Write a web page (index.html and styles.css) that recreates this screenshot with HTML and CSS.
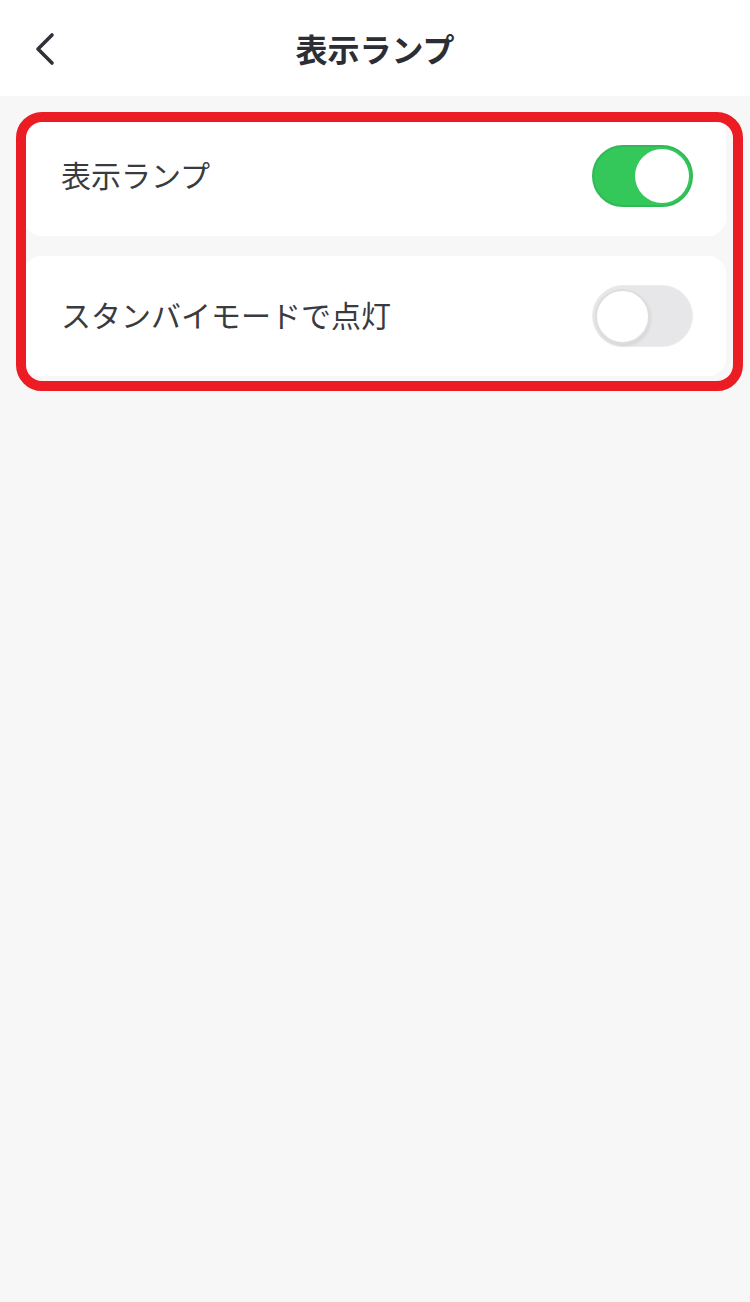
FILE: index.html
```html
<!DOCTYPE html>
<html lang="ja">
<head>
<meta charset="utf-8">
<link rel="stylesheet" href="styles.css">
</head>
<body>
<header class="nav">
  <div class="nav-left">
    <svg class="back" width="24" height="34" viewBox="0 0 24 34"><path d="M18 3 L4 17 L18 31" fill="none" stroke="#30323a" stroke-width="3.6" stroke-linecap="round" stroke-linejoin="round"/></svg>
  </div>
  <h1 class="title">表示ランプ</h1>
  <div class="nav-right"></div>
</header>
<main class="content">
  <div class="group">
    <div class="card">
      <span class="label">表示ランプ</span>
      <span class="toggle on"><span class="knob"></span></span>
    </div>
    <div class="card">
      <span class="label">スタンバイモードで点灯</span>
      <span class="toggle off"><span class="knob"></span></span>
    </div>
  </div>
</main>
</body>
</html>
```
FILE: styles.css
```css
html, body {
  margin: 0;
  padding: 0;
  background: #f7f7f7;
  font-family: "Noto Sans CJK JP", "Noto Sans", sans-serif;
}
.nav {
  height: 96px;
  background: #ffffff;
  display: grid;
  grid-template-columns: 1fr auto 1fr;
  align-items: center;
}
.nav-left {
  padding-left: 34px;
  display: flex;
  align-items: center;
}
.back { display: block; margin-top: 2px; }
.title {
  margin: 0;
  font-size: 32px;
  font-weight: 700;
  color: #2c2e36;
  line-height: 1;
}
.content {
  padding: 20px 24px;
}
.group {
  position: relative;
  display: flex;
  flex-direction: column;
  gap: 20px;
}
.group::after {
  content: "";
  position: absolute;
  left: -8px;
  top: -4px;
  right: -17px;
  bottom: -15px;
  border: 10px solid #ec1c24;
  border-radius: 26px;
  pointer-events: none;
}
.card {
  background: #ffffff;
  border-radius: 18px;
  height: 120px;
  display: flex;
  align-items: center;
  justify-content: space-between;
  padding: 0 33px 0 37px;
}
.label {
  font-size: 30px;
  color: #3a3b40;
  line-height: 1;
  margin-top: -4px;
}
.toggle {
  width: 101px;
  height: 62px;
  border-radius: 31px;
  box-sizing: border-box;
  display: flex;
  align-items: center;
}
.toggle.on {
  background: #34c759;
  border: 2px solid #31b957;
  justify-content: flex-end;
  padding-right: 2px;
}
.toggle.on .knob {
  width: 54px;
  height: 54px;
  border-radius: 50%;
  background: #ffffff;
}
.toggle.off {
  background: #e7e7ea;
  border: 1px solid #ececee;
  justify-content: flex-start;
  padding-left: 2px;
}
.toggle.off .knob {
  width: 55px;
  height: 55px;
  box-sizing: border-box;
  border-radius: 50%;
  background: #ffffff;
  border: 2px solid #dedede;
  box-shadow: 1px 2px 3px rgba(0,0,0,0.08);
}
```
